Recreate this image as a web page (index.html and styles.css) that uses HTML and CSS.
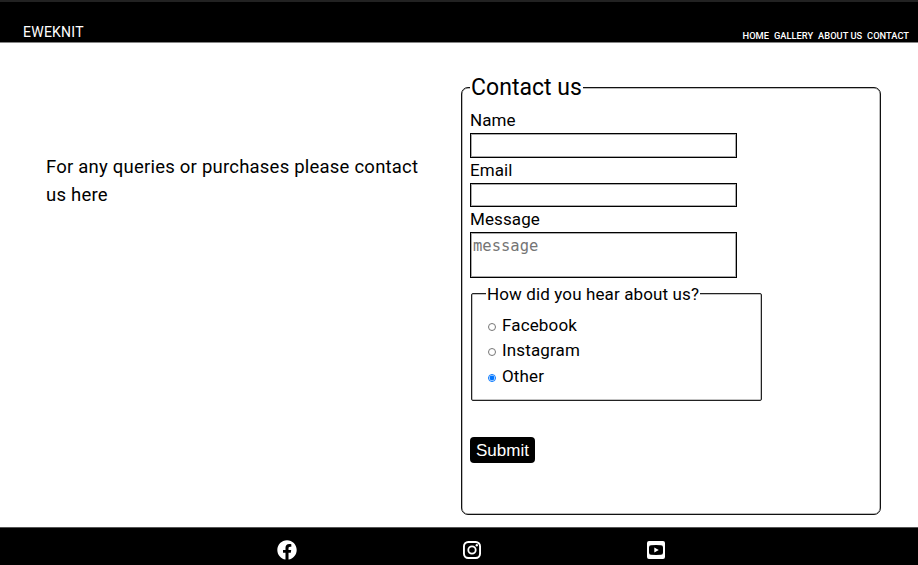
FILE: index.html
```
<!DOCTYPE html>
<html lang="en">
<head>
<meta charset="utf-8">
<title>Eweknit</title>
<link rel="stylesheet" href="styles.css">
</head>
<body>
<header class="header">
  <a class="brand">EWEKNIT</a>
  <nav class="nav"><a>HOME</a><a>GALLERY</a><a>ABOUT US</a><a>CONTACT</a></nav>
</header>
<main class="main">
  <p class="intro">For any queries or purchases please contact us here</p>
  <form>
    <fieldset class="contact">
      <legend class="title">Contact us</legend>
      <label class="label" for="name">Name</label>
      <input class="field" id="name" type="text">
      <label class="label" for="email">Email</label>
      <input class="field" id="email" type="email">
      <label class="label" for="message">Message</label>
      <textarea class="field area" id="message" placeholder="message"></textarea>
      <fieldset class="source">
        <legend class="question">How did you hear about us?</legend>
        <label class="option"><input class="radio" type="radio" name="source">Facebook</label>
        <label class="option"><input class="radio" type="radio" name="source">Instagram</label>
        <label class="option"><input class="radio" type="radio" name="source" checked>Other</label>
      </fieldset>
      <button class="submit" type="button">Submit</button>
    </fieldset>
  </form>
</main>
<footer class="footer">
  <svg class="icon" viewBox="0 0 512 512"><path d="M504 256C504 119 393 8 256 8S8 119 8 256c0 123.800 90.700 226.400 209.300 245V327.700h-63V256h63v-54.600c0-62.200 37-96.500 93.700-96.500 27.100 0 55.500 4.800 55.500 4.800v61h-31.300c-30.800 0-40.400 19.100-40.400 38.700V256h68.800l-11 71.700h-57.800V501C413.300 482.400 504 379.800 504 256z"/></svg>
  <svg class="icon" viewBox="0 0 20 20"><path fill-rule="evenodd" d="M6.200 1h7.600A5.200 5.200 0 0 1 19 6.200v7.600a5.200 5.200 0 0 1-5.200 5.200H6.200A5.200 5.200 0 0 1 1 13.800V6.200A5.200 5.200 0 0 1 6.200 1zM6.500 2.900A3.600 3.600 0 0 0 2.900 6.500v7a3.600 3.600 0 0 0 3.600 3.600h7a3.600 3.600 0 0 0 3.600-3.600v-7a3.600 3.600 0 0 0-3.600-3.600zM10 5.400a4.600 4.600 0 1 1 0 9.200 4.600 4.600 0 0 1 0-9.200zM10 7.200a2.800 2.800 0 1 0 0 5.600 2.800 2.800 0 0 0 0-5.600z"/><circle cx="14.800" cy="5.200" r="1.200"/></svg>
  <svg class="icon" viewBox="0 0 20 20"><path fill-rule="evenodd" d="M3 1h14a2 2 0 0 1 2 2v14a2 2 0 0 1-2 2H3a2 2 0 0 1-2-2V3a2 2 0 0 1 2-2zM5 5.200Q3 5.300 3 7.500v5Q3 14.700 5 14.800q5 .3 10 0 2-.1 2-2.300v-5q0-2.200-2-2.300-5-.3-10 0zM8.300 7.400l4.500 2.600-4.500 2.600z"/></svg>
</footer>
</body>
</html>
```
FILE: styles.css
```
* { box-sizing: border-box; }
body {
  margin: 0;
  height: 565px;
  display: grid;
  grid-template-rows: 43px 484px 38px;
  overflow: hidden;
  background: #fff;
  color: #000;
  font-family: Roboto, sans-serif;
}
.header {
  display: flex;
  justify-content: space-between;
  align-items: flex-end;
  padding: 0 9px 0 23px;
  background: #000;
  border-top: 2px solid #222;
  border-bottom: 1px solid #858585;
  color: #fff;
}
.brand { font-size: 14px; line-height: 20px; letter-spacing: .25px; }
.nav { display: flex; gap: 5px; font-size: 9.3px; line-height: 13px; font-weight: 500; }
.main { display: grid; grid-template-columns: 461px 420px; }
.intro {
  width: 385px;
  margin: 110px 0 0 46px;
  font-size: 18.500px;
  line-height: 28px;
  letter-spacing: .22px;
}
.contact {
  width: 420px;
  height: 442px;
  margin: 30px 0 0;
  padding: 7px 8px 0;
  border: 1px solid #111;
  border-radius: 7px;
  box-shadow: inset 0 0 0 .5px #777;
}
.title { padding: 2px 1px 0; background: #fff; font-size: 23px; line-height: 26px; letter-spacing: .03px; }
.label { display: block; font-size: 17px; line-height: 25px; letter-spacing: .1px; }
.field {
  display: block;
  width: 267px;
  height: 24.500px;
  margin: 0;
  padding: 2px;
  border: 1px solid #000;
  border-radius: 0;
  outline: 0;
  box-shadow: inset 0 0 0 1px #aaa;
}
.area { height: 45.500px; resize: none; font: 15.500px "DejaVu Sans Mono", monospace; line-height: 22px; }
.area::placeholder { color: #757575; }
.source {
  width: 291px;
  height: 117px;
  margin: 6px 0 0 1px;
  padding: 9px 16px 0 14px;
  border: 1px solid #222;
  border-radius: 2px;
  box-shadow: inset 0 0 0 .5px #888;
}
.question { padding: 0 1px; background: #fff; font-size: 17px; line-height: 20px; letter-spacing: .12px; }
.option { display: flex; align-items: center; font-size: 17px; line-height: 25.500px; letter-spacing: .15px; }
.radio { width: 8px; height: 8px; margin: 3px 6px 0 2px; }
.submit {
  display: block;
  width: 65px;
  height: 26px;
  margin: 36px 0 0;
  padding: 2px 0 0;
  border: 0;
  border-radius: 4px;
  background: #000;
  color: #fff;
  font: 17px "Liberation Sans", Arial, sans-serif;
}
.footer {
  display: flex;
  gap: 164.500px;
  padding: 12px 0 0 277px;
  background: #000;
  border-top: 1px solid #555;
}
.icon { width: 20px; height: 20px; flex: none; fill: #fff; }
```
